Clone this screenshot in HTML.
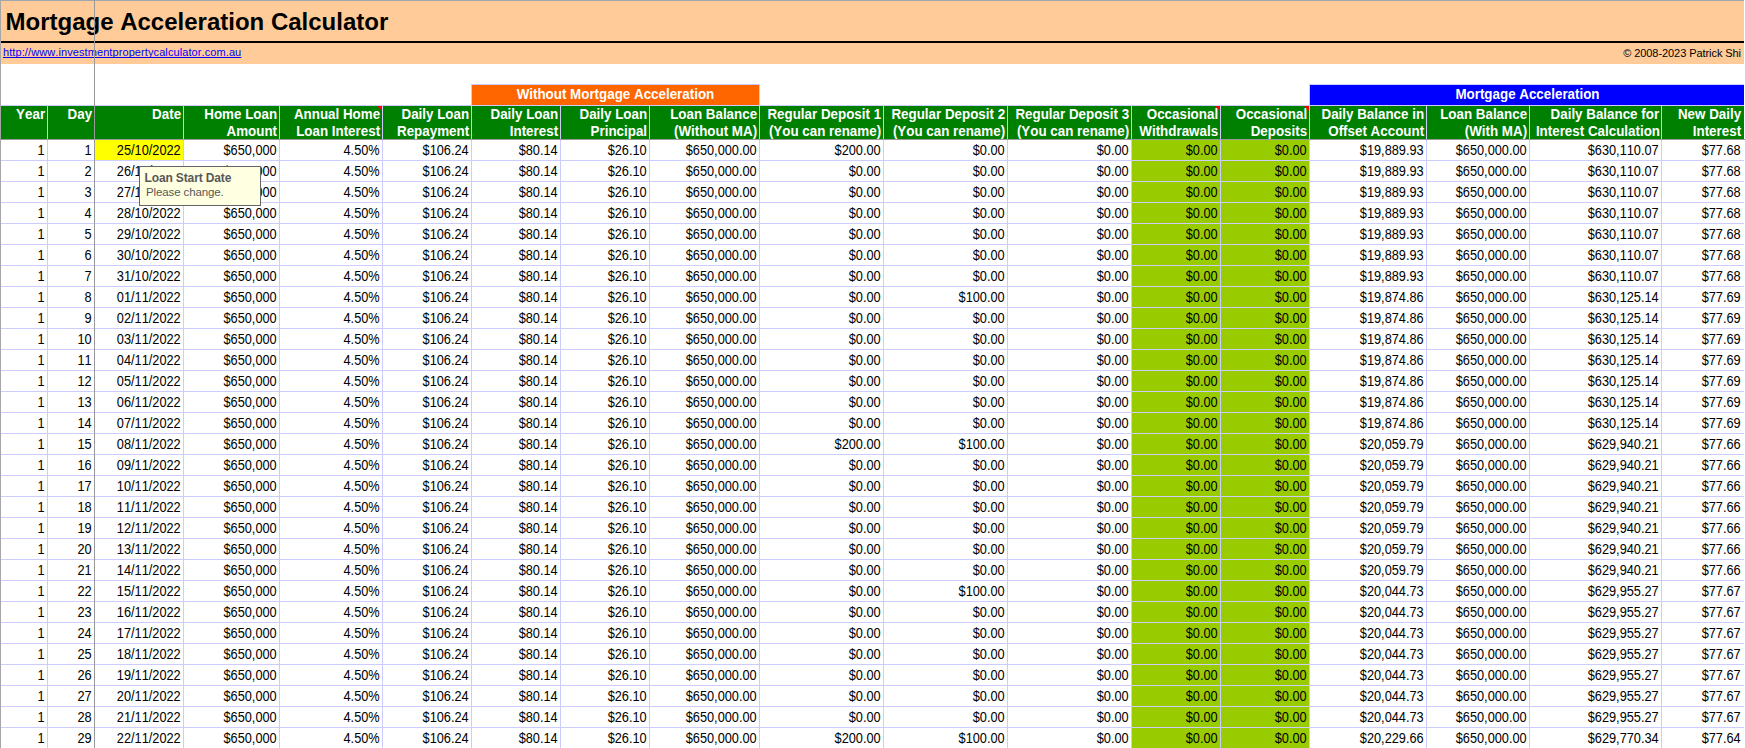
<!DOCTYPE html><html><head><meta charset="utf-8"><title>Mortgage Acceleration Calculator</title><style>
html,body{margin:0;padding:0;background:#fff}
body{width:1745px;height:748px;overflow:hidden;position:relative;font-family:"Liberation Sans",Arial,sans-serif;font-size:13px;color:#000;font-kerning:none}
div{position:absolute;box-sizing:border-box;white-space:nowrap}
.peach{left:1px;top:1px;width:1743px;height:63px;background:#fc9}
.rule{left:1px;top:41px;width:1743px;height:2px;background:#000}
.title{left:5.5px;top:8px;font-weight:bold;font-size:24px;line-height:28px}
.link{left:3px;top:46px;font-size:11px;line-height:13px;letter-spacing:.09px;color:#00f;text-decoration:underline;text-decoration-skip-ink:none}
.copy{right:4px;top:47px;font-size:11px;line-height:13px;letter-spacing:-.07px;text-align:right}
.gtop{left:0;top:0;width:1744px;height:1px;background:#a1a7b0}
.gleft{left:0;top:0;width:1px;height:748px;background:#a6a6a6}
.fv{left:94px;top:0;width:1px;height:748px;background:#999}
.fh{left:0;top:139px;width:1745px;height:1px;background:#999}
.hl{height:1px;background:#ccf;left:1px;width:1743px}
.vl{width:1px;background:#ccf;top:105px;height:643px}
.hb{top:106px;height:33px;background:#008000}
.hd{top:106px;height:33px;color:#fff;font-weight:bold;text-align:right;line-height:17px;padding:0 2px 0 0;font-size:14px;transform:scaleX(.955);transform-origin:100% 50%}
.band{top:85px;height:20px;color:#fff;font-weight:bold;text-align:center;line-height:18px;font-size:14px}
.band span{display:inline-block;transform:scaleX(.955)}
.c{height:20px;line-height:20px;text-align:right;padding:0 2.5px 0 0;font-size:14px;transform:scaleX(.9125);transform-origin:100% 50%}
.g{background:#9c0}
.y{background:#ff0;left:95px;top:140px;width:88px;height:20px}
.tri{width:0;height:0;border-top:5px solid #f00;border-left:5px solid transparent;top:106px}
.tip{left:139px;top:166px;width:122px;height:40px;background:#ffffe1;border:1px solid #646464;color:#575757;font-size:12px}
.tip b{position:absolute;left:4.5px;top:4px;line-height:14px;letter-spacing:-.13px}
.tip span{position:absolute;left:6px;top:18px;line-height:14px;font-size:11.5px;letter-spacing:-.12px}

</style></head><body>
<div class="peach"></div><div class="rule"></div>
<div class="title">Mortgage Acceleration Calculator</div>
<div class="link">http://www.investmentpropertycalculator.com.au</div>
<div class="copy">© 2008-2023 Patrick Shi</div>
<div class="band" style="left:471px;width:289px;top:84px;height:22px;background:#ccf"></div>
<div class="band" style="left:472px;width:287px;background:#f60"><span>Without Mortgage Acceleration</span></div>
<div class="band" style="left:1309px;width:435px;top:84px;height:22px;background:#ccf"></div>
<div class="band" style="left:1310px;width:434px;background:#00f"><span>Mortgage Acceleration</span></div>
<div class="hl" style="top:105px"></div>
<div class="hb" style="left:1px;width:46px"></div><div class="hd" style="left:1px;width:46px">Year</div>
<div class="hb" style="left:48px;width:46px"></div><div class="hd" style="left:48px;width:46px">Day</div>
<div class="hb" style="left:95px;width:88px"></div><div class="hd" style="left:95px;width:88px">Date</div>
<div class="hb" style="left:184px;width:95px"></div><div class="hd" style="left:184px;width:95px">Home Loan<br>Amount</div>
<div class="hb" style="left:280px;width:102px"></div><div class="hd" style="left:280px;width:102px">Annual Home<br>Loan Interest</div>
<div class="tri" style="left:377px"></div>
<div class="hb" style="left:383px;width:88px"></div><div class="hd" style="left:383px;width:88px">Daily Loan<br>Repayment</div>
<div class="hb" style="left:472px;width:88px"></div><div class="hd" style="left:472px;width:88px">Daily Loan<br>Interest</div>
<div class="hb" style="left:561px;width:88px"></div><div class="hd" style="left:561px;width:88px">Daily Loan<br>Principal</div>
<div class="hb" style="left:650px;width:109px"></div><div class="hd" style="left:650px;width:109px">Loan Balance<br>(Without MA)</div>
<div class="hb" style="left:760px;width:123px"></div><div class="hd" style="left:760px;width:123px">Regular Deposit 1<br>(You can rename)</div>
<div class="hb" style="left:884px;width:123px"></div><div class="hd" style="left:884px;width:123px">Regular Deposit 2<br>(You can rename)</div>
<div class="hb" style="left:1008px;width:123px"></div><div class="hd" style="left:1008px;width:123px">Regular Deposit 3<br>(You can rename)</div>
<div class="hb" style="left:1132px;width:88px"></div><div class="hd" style="left:1132px;width:88px">Occasional<br>Withdrawals</div>
<div class="tri" style="left:1215px"></div>
<div class="hb" style="left:1221px;width:88px"></div><div class="hd" style="left:1221px;width:88px">Occasional<br>Deposits</div>
<div class="tri" style="left:1304px"></div>
<div class="hb" style="left:1310px;width:116px"></div><div class="hd" style="left:1310px;width:116px">Daily Balance in<br>Offset Account</div>
<div class="hb" style="left:1427px;width:102px"></div><div class="hd" style="left:1427px;width:102px">Loan Balance<br>(With MA)</div>
<div class="hb" style="left:1530px;width:131px"></div><div class="hd" style="left:1530px;width:131px">Daily Balance for<br>Interest Calculation</div>
<div class="hb" style="left:1662px;width:82px"></div><div class="hd" style="left:1662px;width:81px">New Daily<br>Interest</div>
<div class="g" style="left:1132px;top:140px;width:88px;height:608px"></div><div class="g" style="left:1221px;top:140px;width:88px;height:608px"></div><div class="y"></div>
<div class="c" style="left:1px;top:140px;width:46px">1</div>
<div class="c" style="left:48px;top:140px;width:46px">1</div>
<div class="c" style="left:95px;top:140px;width:88px">25/10/2022</div>
<div class="c" style="left:184px;top:140px;width:95px">$650,000</div>
<div class="c" style="left:280px;top:140px;width:102px">4.50%</div>
<div class="c" style="left:383px;top:140px;width:88px">$106.24</div>
<div class="c" style="left:472px;top:140px;width:88px">$80.14</div>
<div class="c" style="left:561px;top:140px;width:88px">$26.10</div>
<div class="c" style="left:650px;top:140px;width:109px">$650,000.00</div>
<div class="c" style="left:760px;top:140px;width:123px">$200.00</div>
<div class="c" style="left:884px;top:140px;width:123px">$0.00</div>
<div class="c" style="left:1008px;top:140px;width:123px">$0.00</div>
<div class="c" style="left:1132px;top:140px;width:88px">$0.00</div>
<div class="c" style="left:1221px;top:140px;width:88px">$0.00</div>
<div class="c" style="left:1310px;top:140px;width:116px">$19,889.93</div>
<div class="c" style="left:1427px;top:140px;width:102px">$650,000.00</div>
<div class="c" style="left:1530px;top:140px;width:131px">$630,110.07</div>
<div class="c" style="left:1662px;top:140px;width:81px">$77.68</div>
<div class="hl" style="top:160px"></div>
<div class="c" style="left:1px;top:161px;width:46px">1</div>
<div class="c" style="left:48px;top:161px;width:46px">2</div>
<div class="c" style="left:95px;top:161px;width:88px">26/10/2022</div>
<div class="c" style="left:184px;top:161px;width:95px">$650,000</div>
<div class="c" style="left:280px;top:161px;width:102px">4.50%</div>
<div class="c" style="left:383px;top:161px;width:88px">$106.24</div>
<div class="c" style="left:472px;top:161px;width:88px">$80.14</div>
<div class="c" style="left:561px;top:161px;width:88px">$26.10</div>
<div class="c" style="left:650px;top:161px;width:109px">$650,000.00</div>
<div class="c" style="left:760px;top:161px;width:123px">$0.00</div>
<div class="c" style="left:884px;top:161px;width:123px">$0.00</div>
<div class="c" style="left:1008px;top:161px;width:123px">$0.00</div>
<div class="c" style="left:1132px;top:161px;width:88px">$0.00</div>
<div class="c" style="left:1221px;top:161px;width:88px">$0.00</div>
<div class="c" style="left:1310px;top:161px;width:116px">$19,889.93</div>
<div class="c" style="left:1427px;top:161px;width:102px">$650,000.00</div>
<div class="c" style="left:1530px;top:161px;width:131px">$630,110.07</div>
<div class="c" style="left:1662px;top:161px;width:81px">$77.68</div>
<div class="hl" style="top:181px"></div>
<div class="c" style="left:1px;top:182px;width:46px">1</div>
<div class="c" style="left:48px;top:182px;width:46px">3</div>
<div class="c" style="left:95px;top:182px;width:88px">27/10/2022</div>
<div class="c" style="left:184px;top:182px;width:95px">$650,000</div>
<div class="c" style="left:280px;top:182px;width:102px">4.50%</div>
<div class="c" style="left:383px;top:182px;width:88px">$106.24</div>
<div class="c" style="left:472px;top:182px;width:88px">$80.14</div>
<div class="c" style="left:561px;top:182px;width:88px">$26.10</div>
<div class="c" style="left:650px;top:182px;width:109px">$650,000.00</div>
<div class="c" style="left:760px;top:182px;width:123px">$0.00</div>
<div class="c" style="left:884px;top:182px;width:123px">$0.00</div>
<div class="c" style="left:1008px;top:182px;width:123px">$0.00</div>
<div class="c" style="left:1132px;top:182px;width:88px">$0.00</div>
<div class="c" style="left:1221px;top:182px;width:88px">$0.00</div>
<div class="c" style="left:1310px;top:182px;width:116px">$19,889.93</div>
<div class="c" style="left:1427px;top:182px;width:102px">$650,000.00</div>
<div class="c" style="left:1530px;top:182px;width:131px">$630,110.07</div>
<div class="c" style="left:1662px;top:182px;width:81px">$77.68</div>
<div class="hl" style="top:202px"></div>
<div class="c" style="left:1px;top:203px;width:46px">1</div>
<div class="c" style="left:48px;top:203px;width:46px">4</div>
<div class="c" style="left:95px;top:203px;width:88px">28/10/2022</div>
<div class="c" style="left:184px;top:203px;width:95px">$650,000</div>
<div class="c" style="left:280px;top:203px;width:102px">4.50%</div>
<div class="c" style="left:383px;top:203px;width:88px">$106.24</div>
<div class="c" style="left:472px;top:203px;width:88px">$80.14</div>
<div class="c" style="left:561px;top:203px;width:88px">$26.10</div>
<div class="c" style="left:650px;top:203px;width:109px">$650,000.00</div>
<div class="c" style="left:760px;top:203px;width:123px">$0.00</div>
<div class="c" style="left:884px;top:203px;width:123px">$0.00</div>
<div class="c" style="left:1008px;top:203px;width:123px">$0.00</div>
<div class="c" style="left:1132px;top:203px;width:88px">$0.00</div>
<div class="c" style="left:1221px;top:203px;width:88px">$0.00</div>
<div class="c" style="left:1310px;top:203px;width:116px">$19,889.93</div>
<div class="c" style="left:1427px;top:203px;width:102px">$650,000.00</div>
<div class="c" style="left:1530px;top:203px;width:131px">$630,110.07</div>
<div class="c" style="left:1662px;top:203px;width:81px">$77.68</div>
<div class="hl" style="top:223px"></div>
<div class="c" style="left:1px;top:224px;width:46px">1</div>
<div class="c" style="left:48px;top:224px;width:46px">5</div>
<div class="c" style="left:95px;top:224px;width:88px">29/10/2022</div>
<div class="c" style="left:184px;top:224px;width:95px">$650,000</div>
<div class="c" style="left:280px;top:224px;width:102px">4.50%</div>
<div class="c" style="left:383px;top:224px;width:88px">$106.24</div>
<div class="c" style="left:472px;top:224px;width:88px">$80.14</div>
<div class="c" style="left:561px;top:224px;width:88px">$26.10</div>
<div class="c" style="left:650px;top:224px;width:109px">$650,000.00</div>
<div class="c" style="left:760px;top:224px;width:123px">$0.00</div>
<div class="c" style="left:884px;top:224px;width:123px">$0.00</div>
<div class="c" style="left:1008px;top:224px;width:123px">$0.00</div>
<div class="c" style="left:1132px;top:224px;width:88px">$0.00</div>
<div class="c" style="left:1221px;top:224px;width:88px">$0.00</div>
<div class="c" style="left:1310px;top:224px;width:116px">$19,889.93</div>
<div class="c" style="left:1427px;top:224px;width:102px">$650,000.00</div>
<div class="c" style="left:1530px;top:224px;width:131px">$630,110.07</div>
<div class="c" style="left:1662px;top:224px;width:81px">$77.68</div>
<div class="hl" style="top:244px"></div>
<div class="c" style="left:1px;top:245px;width:46px">1</div>
<div class="c" style="left:48px;top:245px;width:46px">6</div>
<div class="c" style="left:95px;top:245px;width:88px">30/10/2022</div>
<div class="c" style="left:184px;top:245px;width:95px">$650,000</div>
<div class="c" style="left:280px;top:245px;width:102px">4.50%</div>
<div class="c" style="left:383px;top:245px;width:88px">$106.24</div>
<div class="c" style="left:472px;top:245px;width:88px">$80.14</div>
<div class="c" style="left:561px;top:245px;width:88px">$26.10</div>
<div class="c" style="left:650px;top:245px;width:109px">$650,000.00</div>
<div class="c" style="left:760px;top:245px;width:123px">$0.00</div>
<div class="c" style="left:884px;top:245px;width:123px">$0.00</div>
<div class="c" style="left:1008px;top:245px;width:123px">$0.00</div>
<div class="c" style="left:1132px;top:245px;width:88px">$0.00</div>
<div class="c" style="left:1221px;top:245px;width:88px">$0.00</div>
<div class="c" style="left:1310px;top:245px;width:116px">$19,889.93</div>
<div class="c" style="left:1427px;top:245px;width:102px">$650,000.00</div>
<div class="c" style="left:1530px;top:245px;width:131px">$630,110.07</div>
<div class="c" style="left:1662px;top:245px;width:81px">$77.68</div>
<div class="hl" style="top:265px"></div>
<div class="c" style="left:1px;top:266px;width:46px">1</div>
<div class="c" style="left:48px;top:266px;width:46px">7</div>
<div class="c" style="left:95px;top:266px;width:88px">31/10/2022</div>
<div class="c" style="left:184px;top:266px;width:95px">$650,000</div>
<div class="c" style="left:280px;top:266px;width:102px">4.50%</div>
<div class="c" style="left:383px;top:266px;width:88px">$106.24</div>
<div class="c" style="left:472px;top:266px;width:88px">$80.14</div>
<div class="c" style="left:561px;top:266px;width:88px">$26.10</div>
<div class="c" style="left:650px;top:266px;width:109px">$650,000.00</div>
<div class="c" style="left:760px;top:266px;width:123px">$0.00</div>
<div class="c" style="left:884px;top:266px;width:123px">$0.00</div>
<div class="c" style="left:1008px;top:266px;width:123px">$0.00</div>
<div class="c" style="left:1132px;top:266px;width:88px">$0.00</div>
<div class="c" style="left:1221px;top:266px;width:88px">$0.00</div>
<div class="c" style="left:1310px;top:266px;width:116px">$19,889.93</div>
<div class="c" style="left:1427px;top:266px;width:102px">$650,000.00</div>
<div class="c" style="left:1530px;top:266px;width:131px">$630,110.07</div>
<div class="c" style="left:1662px;top:266px;width:81px">$77.68</div>
<div class="hl" style="top:286px"></div>
<div class="c" style="left:1px;top:287px;width:46px">1</div>
<div class="c" style="left:48px;top:287px;width:46px">8</div>
<div class="c" style="left:95px;top:287px;width:88px">01/11/2022</div>
<div class="c" style="left:184px;top:287px;width:95px">$650,000</div>
<div class="c" style="left:280px;top:287px;width:102px">4.50%</div>
<div class="c" style="left:383px;top:287px;width:88px">$106.24</div>
<div class="c" style="left:472px;top:287px;width:88px">$80.14</div>
<div class="c" style="left:561px;top:287px;width:88px">$26.10</div>
<div class="c" style="left:650px;top:287px;width:109px">$650,000.00</div>
<div class="c" style="left:760px;top:287px;width:123px">$0.00</div>
<div class="c" style="left:884px;top:287px;width:123px">$100.00</div>
<div class="c" style="left:1008px;top:287px;width:123px">$0.00</div>
<div class="c" style="left:1132px;top:287px;width:88px">$0.00</div>
<div class="c" style="left:1221px;top:287px;width:88px">$0.00</div>
<div class="c" style="left:1310px;top:287px;width:116px">$19,874.86</div>
<div class="c" style="left:1427px;top:287px;width:102px">$650,000.00</div>
<div class="c" style="left:1530px;top:287px;width:131px">$630,125.14</div>
<div class="c" style="left:1662px;top:287px;width:81px">$77.69</div>
<div class="hl" style="top:307px"></div>
<div class="c" style="left:1px;top:308px;width:46px">1</div>
<div class="c" style="left:48px;top:308px;width:46px">9</div>
<div class="c" style="left:95px;top:308px;width:88px">02/11/2022</div>
<div class="c" style="left:184px;top:308px;width:95px">$650,000</div>
<div class="c" style="left:280px;top:308px;width:102px">4.50%</div>
<div class="c" style="left:383px;top:308px;width:88px">$106.24</div>
<div class="c" style="left:472px;top:308px;width:88px">$80.14</div>
<div class="c" style="left:561px;top:308px;width:88px">$26.10</div>
<div class="c" style="left:650px;top:308px;width:109px">$650,000.00</div>
<div class="c" style="left:760px;top:308px;width:123px">$0.00</div>
<div class="c" style="left:884px;top:308px;width:123px">$0.00</div>
<div class="c" style="left:1008px;top:308px;width:123px">$0.00</div>
<div class="c" style="left:1132px;top:308px;width:88px">$0.00</div>
<div class="c" style="left:1221px;top:308px;width:88px">$0.00</div>
<div class="c" style="left:1310px;top:308px;width:116px">$19,874.86</div>
<div class="c" style="left:1427px;top:308px;width:102px">$650,000.00</div>
<div class="c" style="left:1530px;top:308px;width:131px">$630,125.14</div>
<div class="c" style="left:1662px;top:308px;width:81px">$77.69</div>
<div class="hl" style="top:328px"></div>
<div class="c" style="left:1px;top:329px;width:46px">1</div>
<div class="c" style="left:48px;top:329px;width:46px">10</div>
<div class="c" style="left:95px;top:329px;width:88px">03/11/2022</div>
<div class="c" style="left:184px;top:329px;width:95px">$650,000</div>
<div class="c" style="left:280px;top:329px;width:102px">4.50%</div>
<div class="c" style="left:383px;top:329px;width:88px">$106.24</div>
<div class="c" style="left:472px;top:329px;width:88px">$80.14</div>
<div class="c" style="left:561px;top:329px;width:88px">$26.10</div>
<div class="c" style="left:650px;top:329px;width:109px">$650,000.00</div>
<div class="c" style="left:760px;top:329px;width:123px">$0.00</div>
<div class="c" style="left:884px;top:329px;width:123px">$0.00</div>
<div class="c" style="left:1008px;top:329px;width:123px">$0.00</div>
<div class="c" style="left:1132px;top:329px;width:88px">$0.00</div>
<div class="c" style="left:1221px;top:329px;width:88px">$0.00</div>
<div class="c" style="left:1310px;top:329px;width:116px">$19,874.86</div>
<div class="c" style="left:1427px;top:329px;width:102px">$650,000.00</div>
<div class="c" style="left:1530px;top:329px;width:131px">$630,125.14</div>
<div class="c" style="left:1662px;top:329px;width:81px">$77.69</div>
<div class="hl" style="top:349px"></div>
<div class="c" style="left:1px;top:350px;width:46px">1</div>
<div class="c" style="left:48px;top:350px;width:46px">11</div>
<div class="c" style="left:95px;top:350px;width:88px">04/11/2022</div>
<div class="c" style="left:184px;top:350px;width:95px">$650,000</div>
<div class="c" style="left:280px;top:350px;width:102px">4.50%</div>
<div class="c" style="left:383px;top:350px;width:88px">$106.24</div>
<div class="c" style="left:472px;top:350px;width:88px">$80.14</div>
<div class="c" style="left:561px;top:350px;width:88px">$26.10</div>
<div class="c" style="left:650px;top:350px;width:109px">$650,000.00</div>
<div class="c" style="left:760px;top:350px;width:123px">$0.00</div>
<div class="c" style="left:884px;top:350px;width:123px">$0.00</div>
<div class="c" style="left:1008px;top:350px;width:123px">$0.00</div>
<div class="c" style="left:1132px;top:350px;width:88px">$0.00</div>
<div class="c" style="left:1221px;top:350px;width:88px">$0.00</div>
<div class="c" style="left:1310px;top:350px;width:116px">$19,874.86</div>
<div class="c" style="left:1427px;top:350px;width:102px">$650,000.00</div>
<div class="c" style="left:1530px;top:350px;width:131px">$630,125.14</div>
<div class="c" style="left:1662px;top:350px;width:81px">$77.69</div>
<div class="hl" style="top:370px"></div>
<div class="c" style="left:1px;top:371px;width:46px">1</div>
<div class="c" style="left:48px;top:371px;width:46px">12</div>
<div class="c" style="left:95px;top:371px;width:88px">05/11/2022</div>
<div class="c" style="left:184px;top:371px;width:95px">$650,000</div>
<div class="c" style="left:280px;top:371px;width:102px">4.50%</div>
<div class="c" style="left:383px;top:371px;width:88px">$106.24</div>
<div class="c" style="left:472px;top:371px;width:88px">$80.14</div>
<div class="c" style="left:561px;top:371px;width:88px">$26.10</div>
<div class="c" style="left:650px;top:371px;width:109px">$650,000.00</div>
<div class="c" style="left:760px;top:371px;width:123px">$0.00</div>
<div class="c" style="left:884px;top:371px;width:123px">$0.00</div>
<div class="c" style="left:1008px;top:371px;width:123px">$0.00</div>
<div class="c" style="left:1132px;top:371px;width:88px">$0.00</div>
<div class="c" style="left:1221px;top:371px;width:88px">$0.00</div>
<div class="c" style="left:1310px;top:371px;width:116px">$19,874.86</div>
<div class="c" style="left:1427px;top:371px;width:102px">$650,000.00</div>
<div class="c" style="left:1530px;top:371px;width:131px">$630,125.14</div>
<div class="c" style="left:1662px;top:371px;width:81px">$77.69</div>
<div class="hl" style="top:391px"></div>
<div class="c" style="left:1px;top:392px;width:46px">1</div>
<div class="c" style="left:48px;top:392px;width:46px">13</div>
<div class="c" style="left:95px;top:392px;width:88px">06/11/2022</div>
<div class="c" style="left:184px;top:392px;width:95px">$650,000</div>
<div class="c" style="left:280px;top:392px;width:102px">4.50%</div>
<div class="c" style="left:383px;top:392px;width:88px">$106.24</div>
<div class="c" style="left:472px;top:392px;width:88px">$80.14</div>
<div class="c" style="left:561px;top:392px;width:88px">$26.10</div>
<div class="c" style="left:650px;top:392px;width:109px">$650,000.00</div>
<div class="c" style="left:760px;top:392px;width:123px">$0.00</div>
<div class="c" style="left:884px;top:392px;width:123px">$0.00</div>
<div class="c" style="left:1008px;top:392px;width:123px">$0.00</div>
<div class="c" style="left:1132px;top:392px;width:88px">$0.00</div>
<div class="c" style="left:1221px;top:392px;width:88px">$0.00</div>
<div class="c" style="left:1310px;top:392px;width:116px">$19,874.86</div>
<div class="c" style="left:1427px;top:392px;width:102px">$650,000.00</div>
<div class="c" style="left:1530px;top:392px;width:131px">$630,125.14</div>
<div class="c" style="left:1662px;top:392px;width:81px">$77.69</div>
<div class="hl" style="top:412px"></div>
<div class="c" style="left:1px;top:413px;width:46px">1</div>
<div class="c" style="left:48px;top:413px;width:46px">14</div>
<div class="c" style="left:95px;top:413px;width:88px">07/11/2022</div>
<div class="c" style="left:184px;top:413px;width:95px">$650,000</div>
<div class="c" style="left:280px;top:413px;width:102px">4.50%</div>
<div class="c" style="left:383px;top:413px;width:88px">$106.24</div>
<div class="c" style="left:472px;top:413px;width:88px">$80.14</div>
<div class="c" style="left:561px;top:413px;width:88px">$26.10</div>
<div class="c" style="left:650px;top:413px;width:109px">$650,000.00</div>
<div class="c" style="left:760px;top:413px;width:123px">$0.00</div>
<div class="c" style="left:884px;top:413px;width:123px">$0.00</div>
<div class="c" style="left:1008px;top:413px;width:123px">$0.00</div>
<div class="c" style="left:1132px;top:413px;width:88px">$0.00</div>
<div class="c" style="left:1221px;top:413px;width:88px">$0.00</div>
<div class="c" style="left:1310px;top:413px;width:116px">$19,874.86</div>
<div class="c" style="left:1427px;top:413px;width:102px">$650,000.00</div>
<div class="c" style="left:1530px;top:413px;width:131px">$630,125.14</div>
<div class="c" style="left:1662px;top:413px;width:81px">$77.69</div>
<div class="hl" style="top:433px"></div>
<div class="c" style="left:1px;top:434px;width:46px">1</div>
<div class="c" style="left:48px;top:434px;width:46px">15</div>
<div class="c" style="left:95px;top:434px;width:88px">08/11/2022</div>
<div class="c" style="left:184px;top:434px;width:95px">$650,000</div>
<div class="c" style="left:280px;top:434px;width:102px">4.50%</div>
<div class="c" style="left:383px;top:434px;width:88px">$106.24</div>
<div class="c" style="left:472px;top:434px;width:88px">$80.14</div>
<div class="c" style="left:561px;top:434px;width:88px">$26.10</div>
<div class="c" style="left:650px;top:434px;width:109px">$650,000.00</div>
<div class="c" style="left:760px;top:434px;width:123px">$200.00</div>
<div class="c" style="left:884px;top:434px;width:123px">$100.00</div>
<div class="c" style="left:1008px;top:434px;width:123px">$0.00</div>
<div class="c" style="left:1132px;top:434px;width:88px">$0.00</div>
<div class="c" style="left:1221px;top:434px;width:88px">$0.00</div>
<div class="c" style="left:1310px;top:434px;width:116px">$20,059.79</div>
<div class="c" style="left:1427px;top:434px;width:102px">$650,000.00</div>
<div class="c" style="left:1530px;top:434px;width:131px">$629,940.21</div>
<div class="c" style="left:1662px;top:434px;width:81px">$77.66</div>
<div class="hl" style="top:454px"></div>
<div class="c" style="left:1px;top:455px;width:46px">1</div>
<div class="c" style="left:48px;top:455px;width:46px">16</div>
<div class="c" style="left:95px;top:455px;width:88px">09/11/2022</div>
<div class="c" style="left:184px;top:455px;width:95px">$650,000</div>
<div class="c" style="left:280px;top:455px;width:102px">4.50%</div>
<div class="c" style="left:383px;top:455px;width:88px">$106.24</div>
<div class="c" style="left:472px;top:455px;width:88px">$80.14</div>
<div class="c" style="left:561px;top:455px;width:88px">$26.10</div>
<div class="c" style="left:650px;top:455px;width:109px">$650,000.00</div>
<div class="c" style="left:760px;top:455px;width:123px">$0.00</div>
<div class="c" style="left:884px;top:455px;width:123px">$0.00</div>
<div class="c" style="left:1008px;top:455px;width:123px">$0.00</div>
<div class="c" style="left:1132px;top:455px;width:88px">$0.00</div>
<div class="c" style="left:1221px;top:455px;width:88px">$0.00</div>
<div class="c" style="left:1310px;top:455px;width:116px">$20,059.79</div>
<div class="c" style="left:1427px;top:455px;width:102px">$650,000.00</div>
<div class="c" style="left:1530px;top:455px;width:131px">$629,940.21</div>
<div class="c" style="left:1662px;top:455px;width:81px">$77.66</div>
<div class="hl" style="top:475px"></div>
<div class="c" style="left:1px;top:476px;width:46px">1</div>
<div class="c" style="left:48px;top:476px;width:46px">17</div>
<div class="c" style="left:95px;top:476px;width:88px">10/11/2022</div>
<div class="c" style="left:184px;top:476px;width:95px">$650,000</div>
<div class="c" style="left:280px;top:476px;width:102px">4.50%</div>
<div class="c" style="left:383px;top:476px;width:88px">$106.24</div>
<div class="c" style="left:472px;top:476px;width:88px">$80.14</div>
<div class="c" style="left:561px;top:476px;width:88px">$26.10</div>
<div class="c" style="left:650px;top:476px;width:109px">$650,000.00</div>
<div class="c" style="left:760px;top:476px;width:123px">$0.00</div>
<div class="c" style="left:884px;top:476px;width:123px">$0.00</div>
<div class="c" style="left:1008px;top:476px;width:123px">$0.00</div>
<div class="c" style="left:1132px;top:476px;width:88px">$0.00</div>
<div class="c" style="left:1221px;top:476px;width:88px">$0.00</div>
<div class="c" style="left:1310px;top:476px;width:116px">$20,059.79</div>
<div class="c" style="left:1427px;top:476px;width:102px">$650,000.00</div>
<div class="c" style="left:1530px;top:476px;width:131px">$629,940.21</div>
<div class="c" style="left:1662px;top:476px;width:81px">$77.66</div>
<div class="hl" style="top:496px"></div>
<div class="c" style="left:1px;top:497px;width:46px">1</div>
<div class="c" style="left:48px;top:497px;width:46px">18</div>
<div class="c" style="left:95px;top:497px;width:88px">11/11/2022</div>
<div class="c" style="left:184px;top:497px;width:95px">$650,000</div>
<div class="c" style="left:280px;top:497px;width:102px">4.50%</div>
<div class="c" style="left:383px;top:497px;width:88px">$106.24</div>
<div class="c" style="left:472px;top:497px;width:88px">$80.14</div>
<div class="c" style="left:561px;top:497px;width:88px">$26.10</div>
<div class="c" style="left:650px;top:497px;width:109px">$650,000.00</div>
<div class="c" style="left:760px;top:497px;width:123px">$0.00</div>
<div class="c" style="left:884px;top:497px;width:123px">$0.00</div>
<div class="c" style="left:1008px;top:497px;width:123px">$0.00</div>
<div class="c" style="left:1132px;top:497px;width:88px">$0.00</div>
<div class="c" style="left:1221px;top:497px;width:88px">$0.00</div>
<div class="c" style="left:1310px;top:497px;width:116px">$20,059.79</div>
<div class="c" style="left:1427px;top:497px;width:102px">$650,000.00</div>
<div class="c" style="left:1530px;top:497px;width:131px">$629,940.21</div>
<div class="c" style="left:1662px;top:497px;width:81px">$77.66</div>
<div class="hl" style="top:517px"></div>
<div class="c" style="left:1px;top:518px;width:46px">1</div>
<div class="c" style="left:48px;top:518px;width:46px">19</div>
<div class="c" style="left:95px;top:518px;width:88px">12/11/2022</div>
<div class="c" style="left:184px;top:518px;width:95px">$650,000</div>
<div class="c" style="left:280px;top:518px;width:102px">4.50%</div>
<div class="c" style="left:383px;top:518px;width:88px">$106.24</div>
<div class="c" style="left:472px;top:518px;width:88px">$80.14</div>
<div class="c" style="left:561px;top:518px;width:88px">$26.10</div>
<div class="c" style="left:650px;top:518px;width:109px">$650,000.00</div>
<div class="c" style="left:760px;top:518px;width:123px">$0.00</div>
<div class="c" style="left:884px;top:518px;width:123px">$0.00</div>
<div class="c" style="left:1008px;top:518px;width:123px">$0.00</div>
<div class="c" style="left:1132px;top:518px;width:88px">$0.00</div>
<div class="c" style="left:1221px;top:518px;width:88px">$0.00</div>
<div class="c" style="left:1310px;top:518px;width:116px">$20,059.79</div>
<div class="c" style="left:1427px;top:518px;width:102px">$650,000.00</div>
<div class="c" style="left:1530px;top:518px;width:131px">$629,940.21</div>
<div class="c" style="left:1662px;top:518px;width:81px">$77.66</div>
<div class="hl" style="top:538px"></div>
<div class="c" style="left:1px;top:539px;width:46px">1</div>
<div class="c" style="left:48px;top:539px;width:46px">20</div>
<div class="c" style="left:95px;top:539px;width:88px">13/11/2022</div>
<div class="c" style="left:184px;top:539px;width:95px">$650,000</div>
<div class="c" style="left:280px;top:539px;width:102px">4.50%</div>
<div class="c" style="left:383px;top:539px;width:88px">$106.24</div>
<div class="c" style="left:472px;top:539px;width:88px">$80.14</div>
<div class="c" style="left:561px;top:539px;width:88px">$26.10</div>
<div class="c" style="left:650px;top:539px;width:109px">$650,000.00</div>
<div class="c" style="left:760px;top:539px;width:123px">$0.00</div>
<div class="c" style="left:884px;top:539px;width:123px">$0.00</div>
<div class="c" style="left:1008px;top:539px;width:123px">$0.00</div>
<div class="c" style="left:1132px;top:539px;width:88px">$0.00</div>
<div class="c" style="left:1221px;top:539px;width:88px">$0.00</div>
<div class="c" style="left:1310px;top:539px;width:116px">$20,059.79</div>
<div class="c" style="left:1427px;top:539px;width:102px">$650,000.00</div>
<div class="c" style="left:1530px;top:539px;width:131px">$629,940.21</div>
<div class="c" style="left:1662px;top:539px;width:81px">$77.66</div>
<div class="hl" style="top:559px"></div>
<div class="c" style="left:1px;top:560px;width:46px">1</div>
<div class="c" style="left:48px;top:560px;width:46px">21</div>
<div class="c" style="left:95px;top:560px;width:88px">14/11/2022</div>
<div class="c" style="left:184px;top:560px;width:95px">$650,000</div>
<div class="c" style="left:280px;top:560px;width:102px">4.50%</div>
<div class="c" style="left:383px;top:560px;width:88px">$106.24</div>
<div class="c" style="left:472px;top:560px;width:88px">$80.14</div>
<div class="c" style="left:561px;top:560px;width:88px">$26.10</div>
<div class="c" style="left:650px;top:560px;width:109px">$650,000.00</div>
<div class="c" style="left:760px;top:560px;width:123px">$0.00</div>
<div class="c" style="left:884px;top:560px;width:123px">$0.00</div>
<div class="c" style="left:1008px;top:560px;width:123px">$0.00</div>
<div class="c" style="left:1132px;top:560px;width:88px">$0.00</div>
<div class="c" style="left:1221px;top:560px;width:88px">$0.00</div>
<div class="c" style="left:1310px;top:560px;width:116px">$20,059.79</div>
<div class="c" style="left:1427px;top:560px;width:102px">$650,000.00</div>
<div class="c" style="left:1530px;top:560px;width:131px">$629,940.21</div>
<div class="c" style="left:1662px;top:560px;width:81px">$77.66</div>
<div class="hl" style="top:580px"></div>
<div class="c" style="left:1px;top:581px;width:46px">1</div>
<div class="c" style="left:48px;top:581px;width:46px">22</div>
<div class="c" style="left:95px;top:581px;width:88px">15/11/2022</div>
<div class="c" style="left:184px;top:581px;width:95px">$650,000</div>
<div class="c" style="left:280px;top:581px;width:102px">4.50%</div>
<div class="c" style="left:383px;top:581px;width:88px">$106.24</div>
<div class="c" style="left:472px;top:581px;width:88px">$80.14</div>
<div class="c" style="left:561px;top:581px;width:88px">$26.10</div>
<div class="c" style="left:650px;top:581px;width:109px">$650,000.00</div>
<div class="c" style="left:760px;top:581px;width:123px">$0.00</div>
<div class="c" style="left:884px;top:581px;width:123px">$100.00</div>
<div class="c" style="left:1008px;top:581px;width:123px">$0.00</div>
<div class="c" style="left:1132px;top:581px;width:88px">$0.00</div>
<div class="c" style="left:1221px;top:581px;width:88px">$0.00</div>
<div class="c" style="left:1310px;top:581px;width:116px">$20,044.73</div>
<div class="c" style="left:1427px;top:581px;width:102px">$650,000.00</div>
<div class="c" style="left:1530px;top:581px;width:131px">$629,955.27</div>
<div class="c" style="left:1662px;top:581px;width:81px">$77.67</div>
<div class="hl" style="top:601px"></div>
<div class="c" style="left:1px;top:602px;width:46px">1</div>
<div class="c" style="left:48px;top:602px;width:46px">23</div>
<div class="c" style="left:95px;top:602px;width:88px">16/11/2022</div>
<div class="c" style="left:184px;top:602px;width:95px">$650,000</div>
<div class="c" style="left:280px;top:602px;width:102px">4.50%</div>
<div class="c" style="left:383px;top:602px;width:88px">$106.24</div>
<div class="c" style="left:472px;top:602px;width:88px">$80.14</div>
<div class="c" style="left:561px;top:602px;width:88px">$26.10</div>
<div class="c" style="left:650px;top:602px;width:109px">$650,000.00</div>
<div class="c" style="left:760px;top:602px;width:123px">$0.00</div>
<div class="c" style="left:884px;top:602px;width:123px">$0.00</div>
<div class="c" style="left:1008px;top:602px;width:123px">$0.00</div>
<div class="c" style="left:1132px;top:602px;width:88px">$0.00</div>
<div class="c" style="left:1221px;top:602px;width:88px">$0.00</div>
<div class="c" style="left:1310px;top:602px;width:116px">$20,044.73</div>
<div class="c" style="left:1427px;top:602px;width:102px">$650,000.00</div>
<div class="c" style="left:1530px;top:602px;width:131px">$629,955.27</div>
<div class="c" style="left:1662px;top:602px;width:81px">$77.67</div>
<div class="hl" style="top:622px"></div>
<div class="c" style="left:1px;top:623px;width:46px">1</div>
<div class="c" style="left:48px;top:623px;width:46px">24</div>
<div class="c" style="left:95px;top:623px;width:88px">17/11/2022</div>
<div class="c" style="left:184px;top:623px;width:95px">$650,000</div>
<div class="c" style="left:280px;top:623px;width:102px">4.50%</div>
<div class="c" style="left:383px;top:623px;width:88px">$106.24</div>
<div class="c" style="left:472px;top:623px;width:88px">$80.14</div>
<div class="c" style="left:561px;top:623px;width:88px">$26.10</div>
<div class="c" style="left:650px;top:623px;width:109px">$650,000.00</div>
<div class="c" style="left:760px;top:623px;width:123px">$0.00</div>
<div class="c" style="left:884px;top:623px;width:123px">$0.00</div>
<div class="c" style="left:1008px;top:623px;width:123px">$0.00</div>
<div class="c" style="left:1132px;top:623px;width:88px">$0.00</div>
<div class="c" style="left:1221px;top:623px;width:88px">$0.00</div>
<div class="c" style="left:1310px;top:623px;width:116px">$20,044.73</div>
<div class="c" style="left:1427px;top:623px;width:102px">$650,000.00</div>
<div class="c" style="left:1530px;top:623px;width:131px">$629,955.27</div>
<div class="c" style="left:1662px;top:623px;width:81px">$77.67</div>
<div class="hl" style="top:643px"></div>
<div class="c" style="left:1px;top:644px;width:46px">1</div>
<div class="c" style="left:48px;top:644px;width:46px">25</div>
<div class="c" style="left:95px;top:644px;width:88px">18/11/2022</div>
<div class="c" style="left:184px;top:644px;width:95px">$650,000</div>
<div class="c" style="left:280px;top:644px;width:102px">4.50%</div>
<div class="c" style="left:383px;top:644px;width:88px">$106.24</div>
<div class="c" style="left:472px;top:644px;width:88px">$80.14</div>
<div class="c" style="left:561px;top:644px;width:88px">$26.10</div>
<div class="c" style="left:650px;top:644px;width:109px">$650,000.00</div>
<div class="c" style="left:760px;top:644px;width:123px">$0.00</div>
<div class="c" style="left:884px;top:644px;width:123px">$0.00</div>
<div class="c" style="left:1008px;top:644px;width:123px">$0.00</div>
<div class="c" style="left:1132px;top:644px;width:88px">$0.00</div>
<div class="c" style="left:1221px;top:644px;width:88px">$0.00</div>
<div class="c" style="left:1310px;top:644px;width:116px">$20,044.73</div>
<div class="c" style="left:1427px;top:644px;width:102px">$650,000.00</div>
<div class="c" style="left:1530px;top:644px;width:131px">$629,955.27</div>
<div class="c" style="left:1662px;top:644px;width:81px">$77.67</div>
<div class="hl" style="top:664px"></div>
<div class="c" style="left:1px;top:665px;width:46px">1</div>
<div class="c" style="left:48px;top:665px;width:46px">26</div>
<div class="c" style="left:95px;top:665px;width:88px">19/11/2022</div>
<div class="c" style="left:184px;top:665px;width:95px">$650,000</div>
<div class="c" style="left:280px;top:665px;width:102px">4.50%</div>
<div class="c" style="left:383px;top:665px;width:88px">$106.24</div>
<div class="c" style="left:472px;top:665px;width:88px">$80.14</div>
<div class="c" style="left:561px;top:665px;width:88px">$26.10</div>
<div class="c" style="left:650px;top:665px;width:109px">$650,000.00</div>
<div class="c" style="left:760px;top:665px;width:123px">$0.00</div>
<div class="c" style="left:884px;top:665px;width:123px">$0.00</div>
<div class="c" style="left:1008px;top:665px;width:123px">$0.00</div>
<div class="c" style="left:1132px;top:665px;width:88px">$0.00</div>
<div class="c" style="left:1221px;top:665px;width:88px">$0.00</div>
<div class="c" style="left:1310px;top:665px;width:116px">$20,044.73</div>
<div class="c" style="left:1427px;top:665px;width:102px">$650,000.00</div>
<div class="c" style="left:1530px;top:665px;width:131px">$629,955.27</div>
<div class="c" style="left:1662px;top:665px;width:81px">$77.67</div>
<div class="hl" style="top:685px"></div>
<div class="c" style="left:1px;top:686px;width:46px">1</div>
<div class="c" style="left:48px;top:686px;width:46px">27</div>
<div class="c" style="left:95px;top:686px;width:88px">20/11/2022</div>
<div class="c" style="left:184px;top:686px;width:95px">$650,000</div>
<div class="c" style="left:280px;top:686px;width:102px">4.50%</div>
<div class="c" style="left:383px;top:686px;width:88px">$106.24</div>
<div class="c" style="left:472px;top:686px;width:88px">$80.14</div>
<div class="c" style="left:561px;top:686px;width:88px">$26.10</div>
<div class="c" style="left:650px;top:686px;width:109px">$650,000.00</div>
<div class="c" style="left:760px;top:686px;width:123px">$0.00</div>
<div class="c" style="left:884px;top:686px;width:123px">$0.00</div>
<div class="c" style="left:1008px;top:686px;width:123px">$0.00</div>
<div class="c" style="left:1132px;top:686px;width:88px">$0.00</div>
<div class="c" style="left:1221px;top:686px;width:88px">$0.00</div>
<div class="c" style="left:1310px;top:686px;width:116px">$20,044.73</div>
<div class="c" style="left:1427px;top:686px;width:102px">$650,000.00</div>
<div class="c" style="left:1530px;top:686px;width:131px">$629,955.27</div>
<div class="c" style="left:1662px;top:686px;width:81px">$77.67</div>
<div class="hl" style="top:706px"></div>
<div class="c" style="left:1px;top:707px;width:46px">1</div>
<div class="c" style="left:48px;top:707px;width:46px">28</div>
<div class="c" style="left:95px;top:707px;width:88px">21/11/2022</div>
<div class="c" style="left:184px;top:707px;width:95px">$650,000</div>
<div class="c" style="left:280px;top:707px;width:102px">4.50%</div>
<div class="c" style="left:383px;top:707px;width:88px">$106.24</div>
<div class="c" style="left:472px;top:707px;width:88px">$80.14</div>
<div class="c" style="left:561px;top:707px;width:88px">$26.10</div>
<div class="c" style="left:650px;top:707px;width:109px">$650,000.00</div>
<div class="c" style="left:760px;top:707px;width:123px">$0.00</div>
<div class="c" style="left:884px;top:707px;width:123px">$0.00</div>
<div class="c" style="left:1008px;top:707px;width:123px">$0.00</div>
<div class="c" style="left:1132px;top:707px;width:88px">$0.00</div>
<div class="c" style="left:1221px;top:707px;width:88px">$0.00</div>
<div class="c" style="left:1310px;top:707px;width:116px">$20,044.73</div>
<div class="c" style="left:1427px;top:707px;width:102px">$650,000.00</div>
<div class="c" style="left:1530px;top:707px;width:131px">$629,955.27</div>
<div class="c" style="left:1662px;top:707px;width:81px">$77.67</div>
<div class="hl" style="top:727px"></div>
<div class="c" style="left:1px;top:728px;width:46px">1</div>
<div class="c" style="left:48px;top:728px;width:46px">29</div>
<div class="c" style="left:95px;top:728px;width:88px">22/11/2022</div>
<div class="c" style="left:184px;top:728px;width:95px">$650,000</div>
<div class="c" style="left:280px;top:728px;width:102px">4.50%</div>
<div class="c" style="left:383px;top:728px;width:88px">$106.24</div>
<div class="c" style="left:472px;top:728px;width:88px">$80.14</div>
<div class="c" style="left:561px;top:728px;width:88px">$26.10</div>
<div class="c" style="left:650px;top:728px;width:109px">$650,000.00</div>
<div class="c" style="left:760px;top:728px;width:123px">$200.00</div>
<div class="c" style="left:884px;top:728px;width:123px">$100.00</div>
<div class="c" style="left:1008px;top:728px;width:123px">$0.00</div>
<div class="c" style="left:1132px;top:728px;width:88px">$0.00</div>
<div class="c" style="left:1221px;top:728px;width:88px">$0.00</div>
<div class="c" style="left:1310px;top:728px;width:116px">$20,229.66</div>
<div class="c" style="left:1427px;top:728px;width:102px">$650,000.00</div>
<div class="c" style="left:1530px;top:728px;width:131px">$629,770.34</div>
<div class="c" style="left:1662px;top:728px;width:81px">$77.64</div>
<div class="hl" style="top:748px"></div>
<div class="vl" style="left:47px"></div>
<div class="vl" style="left:94px"></div>
<div class="vl" style="left:183px"></div>
<div class="vl" style="left:279px"></div>
<div class="vl" style="left:382px"></div>
<div class="vl" style="left:471px"></div>
<div class="vl" style="left:560px"></div>
<div class="vl" style="left:649px"></div>
<div class="vl" style="left:759px"></div>
<div class="vl" style="left:883px"></div>
<div class="vl" style="left:1007px"></div>
<div class="vl" style="left:1131px"></div>
<div class="vl" style="left:1220px"></div>
<div class="vl" style="left:1309px"></div>
<div class="vl" style="left:1426px"></div>
<div class="vl" style="left:1529px"></div>
<div class="vl" style="left:1661px"></div>
<div class="gtop"></div><div class="gleft"></div><div class="fv"></div><div class="fh"></div>
<div class="tip"><b>Loan Start Date</b><span>Please change.</span></div>
</body></html>
